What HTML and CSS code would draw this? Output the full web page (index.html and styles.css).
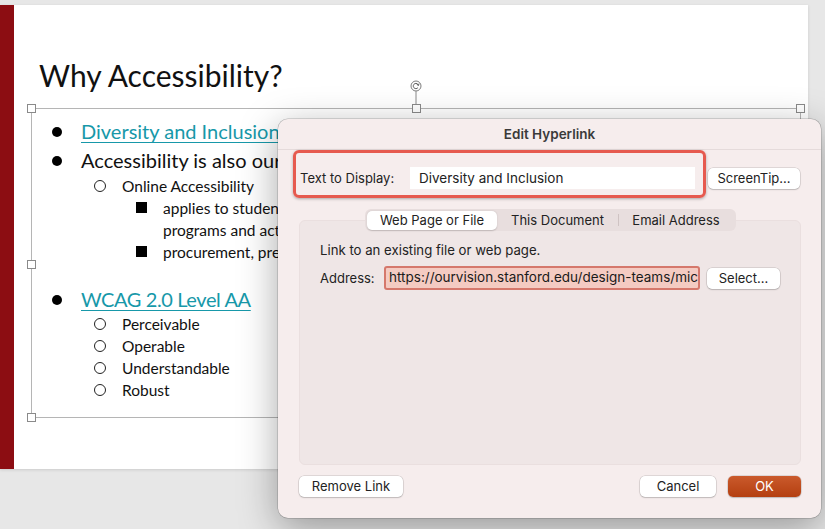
FILE: index.html
```html
<!DOCTYPE html>
<html lang="en">
<head>
<meta charset="UTF-8">
<meta name="viewport" content="width=device-width, initial-scale=1.0">
<title>Edit Hyperlink</title>
<link rel="stylesheet" href="styles.css">
</head>
<body>
<div class="stage">
  <div class="slide">
    <div class="accent"></div>
    <div class="slide-body">
      <h1 class="slide-title">Why Accessibility?</h1>
      <div class="textbox">
        <!-- selection handles -->
        <svg class="rotate" width="12" height="24" viewBox="0 0 12 24">
          <circle cx="6" cy="6" r="5" fill="#fff" stroke="#7d7d7d" stroke-width="1"/>
          <path d="M8.4 5.3 A2.6 2.6 0 1 0 7.8 7.8" fill="none" stroke="#555" stroke-width="1"/>
          <path d="M6.8 4.5 L8.5 5.4 L9 3.6" fill="none" stroke="#555" stroke-width="0.9"/>
          <line x1="6" y1="11" x2="6" y2="24" stroke="#8a8a8a" stroke-width="1"/>
        </svg>
        <span class="handle h-tl"></span>
        <span class="handle h-tm"></span>
        <span class="handle h-tr"></span>
        <span class="handle h-ml"></span>
        <span class="handle h-bl"></span>

        <div class="row lvl1"><span class="dot"></span><a class="link">Diversity and Inclusion</a></div>
        <div class="row lvl1"><span class="dot"></span><span>Accessibility is also our responsibility</span></div>
        <div class="row lvl2"><span class="ring"></span><span>Online Accessibility</span></div>
        <div class="row lvl3"><span class="square"></span><span>applies to students, faculty and staff in all<br>programs and activities</span></div>
        <div class="row lvl3"><span class="square"></span><span>procurement, preferably accessible</span></div>
        <div class="row lvl1 spaced"><span class="dot"></span><a class="link">WCAG 2.0 Level AA</a></div>
        <div class="row lvl2"><span class="ring"></span><span>Perceivable</span></div>
        <div class="row lvl2"><span class="ring"></span><span>Operable</span></div>
        <div class="row lvl2"><span class="ring"></span><span>Understandable</span></div>
        <div class="row lvl2"><span class="ring"></span><span>Robust</span></div>
      </div>
    </div>
  </div>

  <div class="dialog">
    <div class="dialog-title">Edit Hyperlink</div>
    <div class="callout"></div>
    <div class="display-row">
      <span class="label">Text to Display:</span>
      <div class="field display-field">Diversity and Inclusion</div>
      <div class="btn screentip">ScreenTip...</div>
    </div>
    <div class="tabs">
      <div class="tab active">Web Page or File</div>
      <div class="tab doc">This Document</div>
      <div class="tab mail">Email Address</div>
    </div>
    <div class="panel">
      <div class="hint">Link to an existing file or web page.</div>
      <div class="address-row">
        <span class="label">Address:</span>
        <div class="address-field">https://ourvision.stanford.edu/design-teams/mic</div>
        <div class="btn select">Select...</div>
      </div>
    </div>
    <div class="footer">
      <div class="btn remove">Remove Link</div>
      <div class="btn cancel">Cancel</div>
      <div class="btn ok">OK</div>
    </div>
  </div>
</div>
</body>
</html>
```

FILE: styles.css
```css
body {
  margin: 0;
  background: #e7e7e7;
  font-family: Inter, "Liberation Sans", Arial, sans-serif;
}
.stage {
  position: relative;
  width: 825px;
  height: 529px;
  padding-top: 5px;
  box-sizing: border-box;
  overflow: hidden;
}

/* slide */
.slide {
  display: flex;
  width: 808px;
  height: 464px;
  background: #fff;
  box-shadow: 0 1px 3px rgba(0, 0, 0, 0.12);
}
.accent {
  width: 14px;
  background: #8c0d12;
}
.slide-body {
  flex: 1;
  font-family: Lato, "Open Sans", sans-serif;
  color: #111;
}
.slide-title {
  margin: 52px 0 15px 25px;
  font-size: 30px;
  line-height: 36px;
  font-weight: 400;
}
.textbox {
  position: relative;
  margin-left: 17px;
  width: 770px;
  height: 310px;
  box-sizing: border-box;
  border: 1px solid #b5b5b5;
  padding-top: 8px;
}
.handle {
  position: absolute;
  width: 9px;
  height: 9px;
  box-sizing: border-box;
  background: #fff;
  border: 1px solid #8a8a8a;
}
.h-tl { left: -5px; top: -5px; }
.h-tm { left: 380px; top: -5px; }
.h-tr { right: -5px; top: -5px; }
.h-ml { left: -5px; top: 151px; }
.h-bl { left: -5px; bottom: -5px; }
.rotate {
  position: absolute;
  left: 378px;
  top: -29px;
}

.row {
  display: flex;
  align-items: flex-start;
  white-space: nowrap;
}
.lvl1 {
  padding-left: 20px;
  font-size: 20px;
  line-height: 29px;
}
.lvl2 {
  padding-left: 62px;
  font-size: 15.5px;
  line-height: 22px;
}
.lvl3 {
  padding-left: 104px;
  font-size: 15.5px;
  line-height: 22px;
}
.spaced {
  margin-top: 23px;
  line-height: 27px;
}
.spaced .link {
  letter-spacing: -0.4px;
}
.dot {
  flex: none;
  width: 10px;
  height: 10px;
  margin: 10px 19px 0 0;
  border-radius: 50%;
  background: #000;
}
.spaced .dot {
  margin-top: 9px;
}
.ring {
  flex: none;
  width: 12px;
  height: 12px;
  box-sizing: border-box;
  margin: 5px 16px 0 0;
  border: 1.5px solid #222;
  border-radius: 50%;
}
.square {
  flex: none;
  width: 11px;
  height: 11px;
  margin: 5px 16px 0 0;
  background: #000;
}
.link {
  color: #1798a9;
  text-decoration: underline;
  text-underline-offset: 3px;
  text-decoration-thickness: 1px;
}

/* dialog */
.dialog {
  position: absolute;
  left: 278px;
  top: 119px;
  width: 543px;
  height: 399px;
  display: flex;
  flex-direction: column;
  background: #f6eded;
  border-radius: 10px;
  box-shadow: 0 0 0 0.5px rgba(0, 0, 0, 0.25), 0 10px 38px rgba(0, 0, 0, 0.35);
  color: #222;
  font-size: 13px;
}
.dialog-title {
  height: 30px;
  line-height: 30px;
  text-align: center;
  font-size: 13.5px;
  font-weight: 600;
  color: #3a3a3a;
  border-bottom: 1px solid #e5dbdb;
}
.callout {
  position: absolute;
  left: 15px;
  top: 31px;
  width: 413px;
  height: 48px;
  box-sizing: border-box;
  border: 3px solid #e65a4f;
  border-radius: 6px;
  box-shadow: 0 1px 3px rgba(0, 0, 0, 0.3);
}
.display-row {
  display: flex;
  align-items: center;
  height: 22px;
  margin: 17px 0 0 22px;
}
.display-row .label {
  width: 110px;
}
.field {
  height: 22px;
  box-sizing: border-box;
  padding-left: 9px;
  background: #fff;
  font-size: 13.5px;
  line-height: 22px;
}
.display-field {
  width: 285px;
}
.btn {
  height: 21px;
  line-height: 21px;
  text-align: center;
  background: #fff;
  border-radius: 5px;
  box-shadow: 0 0 0 0.5px rgba(0, 0, 0, 0.18), 0 1px 1.5px rgba(0, 0, 0, 0.15);
}
.screentip {
  width: 92px;
  margin-left: 13px;
}

.tabs {
  position: relative;
  align-self: flex-start;
  display: flex;
  align-items: center;
  height: 22px;
  margin: 20px 0 0 87px;
  padding: 0 3px 0 2px;
  background: #e8dede;
  border-radius: 6px;
}
.tab {
  height: 19px;
  line-height: 19px;
  text-align: center;
}
.tab.active {
  width: 130px;
  background: #fff;
  border-radius: 5px;
  box-shadow: 0 0.5px 1.5px rgba(0, 0, 0, 0.18);
}
.tab.doc {
  width: 121px;
}
.tab.mail {
  width: 114px;
  line-height: 12px;
  height: 12px;
  border-left: 1px solid #cfc3c3;
}

.panel {
  height: 245px;
  box-sizing: border-box;
  margin: -11px 20px 0 21px;
  padding: 21px 0 0 20px;
  background: #efe6e6;
  border: 1px solid #eadfdf;
  border-radius: 6px;
}
.hint {
  line-height: 16px;
  font-size: 13.2px;
}
.address-row {
  display: flex;
  align-items: center;
  height: 24px;
  margin-top: 8px;
}
.address-row .label {
  width: 64px;
}
.address-field {
  width: 316px;
  height: 24px;
  box-sizing: border-box;
  padding-left: 3px;
  overflow: hidden;
  white-space: nowrap;
  background: #f4cbc2;
  border: 2.5px solid #d5786c;
  border-radius: 3px;
  font-size: 13.5px;
  line-height: 19px;
  color: #1a1a1a;
}
.select {
  width: 73px;
  margin-left: 7px;
}

.footer {
  display: flex;
  margin: 11px 20px 0 21px;
}
.remove {
  width: 104px;
}
.cancel {
  width: 76px;
  margin-left: auto;
}
.ok {
  width: 73px;
  margin-left: 12px;
  background: linear-gradient(#ca5a2c, #b43f10);
  color: #fff;
}
```
